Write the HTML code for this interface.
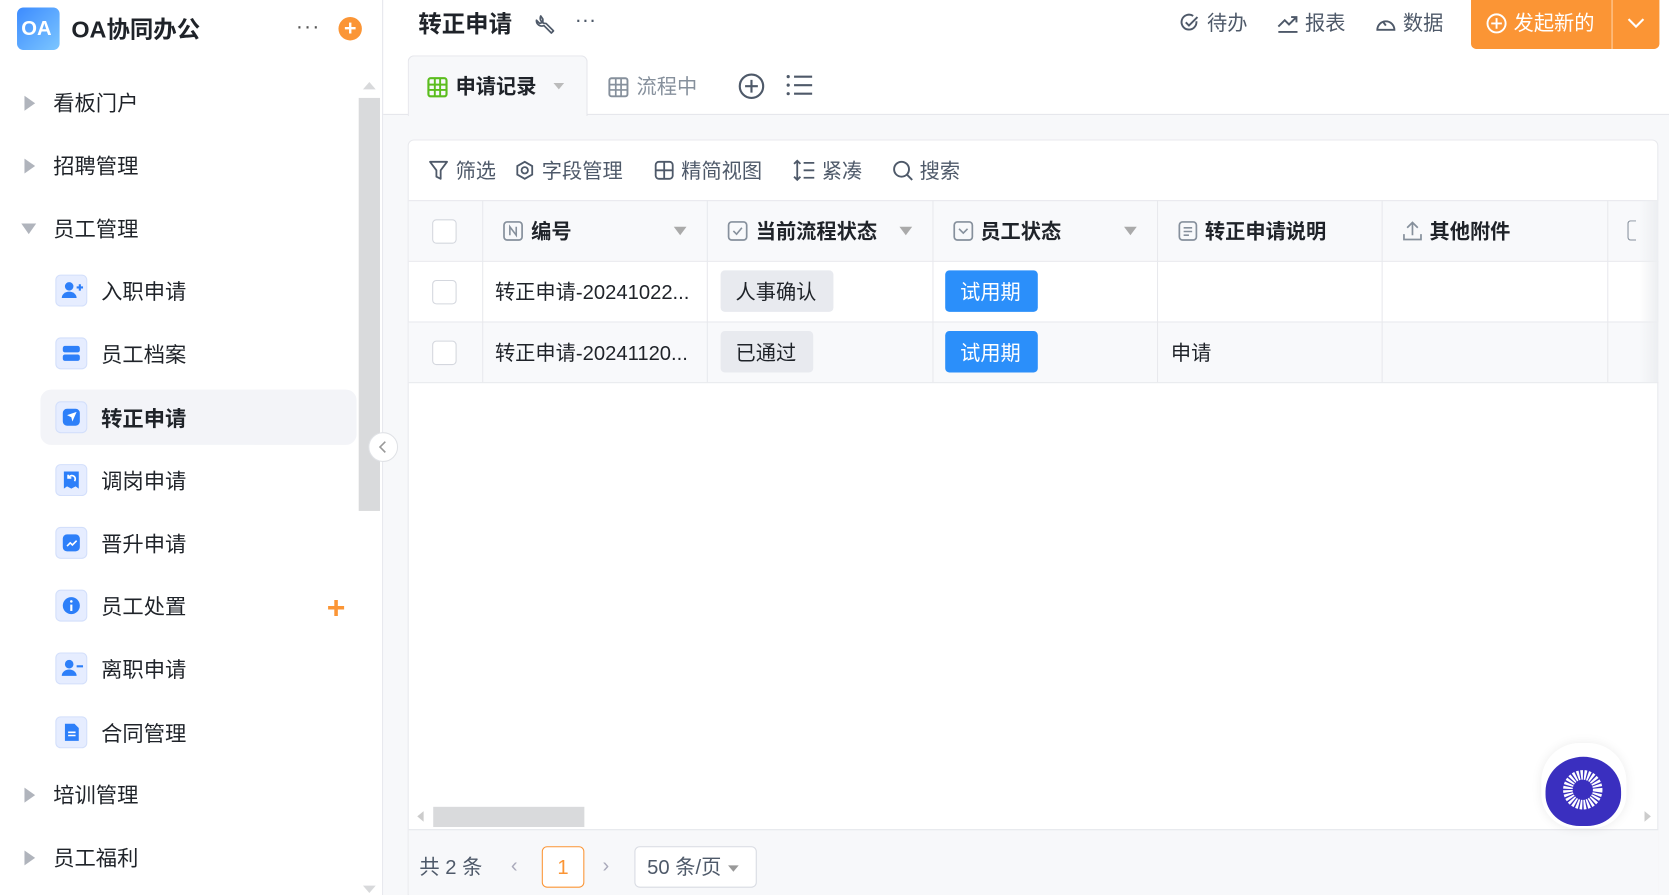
<!DOCTYPE html>
<html><head><meta charset="utf-8">
<style>
*{box-sizing:border-box;margin:0;padding:0}
html,body{width:1669px;height:895px;overflow:hidden;background:#fff}
#root{position:absolute;left:0;top:0;width:1568px;height:841px;transform:scale(1.06441);transform-origin:0 0;font-family:"Liberation Sans","Noto Sans CJK SC",sans-serif;color:#1f2329}
.a{position:absolute}
.t{position:absolute;white-space:nowrap;line-height:1;margin-top:1px}
.mi{font-size:20px;color:#1f2329}
.tri{position:absolute;width:0;height:0;border-top:7px solid transparent;border-bottom:7px solid transparent;border-left:10px solid #b0b4bc}
.ib{position:absolute;left:52px;width:30px;height:30px;border-radius:5px;background:#e6edff;border:1px solid #d3dffb}
.th{font-size:19px;font-weight:bold;color:#1f2329}
.gray{color:#4e5969}
</style></head><body><div id="root">
<!-- sidebar -->
<div class="a" style="left:359px;top:0;width:1px;height:841px;background:#e5e6eb"></div>
<div class="a" style="left:16px;top:7px;width:40px;height:40px;border-radius:6px;background:linear-gradient(135deg,#3c8bff,#7cc6ff)"></div>
<div class="t" style="left:20px;top:17px;font-size:19px;font-weight:bold;color:#fff">OA</div>
<div class="t" style="left:67px;top:16px;font-size:22px;font-weight:bold">OA协同办公</div>
<div class="t" style="left:278px;top:14px;font-size:20px;color:#555;letter-spacing:1px">···</div>
<div class="a" style="left:318px;top:16px;width:22px;height:22px;border-radius:50%;background:#fb9535"></div>
<div class="t" style="left:322px;top:16px;font-size:20px;color:#fff;font-weight:bold;width:14px;text-align:center">+</div>
<!-- scrollbar -->
<div class="a" style="left:337px;top:92px;width:20px;height:388px;background:#d9dadc"></div>
<div class="a" style="left:341px;top:77px;border-left:6px solid transparent;border-right:6px solid transparent;border-bottom:7px solid #d8d9db"></div>
<div class="a" style="left:341px;top:832px;border-left:6px solid transparent;border-right:6px solid transparent;border-top:7px solid #d8d9db"></div>
<!-- groups -->
<div class="tri" style="left:23px;top:90px"></div><div class="t mi" style="left:50px;top:87px">看板门户</div>
<div class="tri" style="left:23px;top:149px"></div><div class="t mi" style="left:50px;top:146px">招聘管理</div>
<div class="a" style="left:20px;top:210px;border-left:7px solid transparent;border-right:7px solid transparent;border-top:10px solid #b0b4bc"></div><div class="t mi" style="left:50px;top:205px">员工管理</div>
<div class="a" style="left:38px;top:366px;width:297px;height:52px;border-radius:10px;background:#f3f4f8"></div>
<div class="ib" style="top:258px"></div><div class="t mi" style="left:95px;top:264px">入职申请</div>
<div class="ib" style="top:317px"></div><div class="t mi" style="left:95px;top:323px">员工档案</div>
<div class="ib" style="top:377px"></div><div class="t mi" style="left:95px;top:383px;font-weight:bold">转正申请</div>
<div class="ib" style="top:436px"></div><div class="t mi" style="left:95px;top:442px">调岗申请</div>
<div class="ib" style="top:495px"></div><div class="t mi" style="left:95px;top:501px">晋升申请</div>
<div class="ib" style="top:554px"></div><div class="t mi" style="left:95px;top:560px">员工处置</div>
<div class="ib" style="top:613px"></div><div class="t mi" style="left:95px;top:619px">离职申请</div>
<div class="ib" style="top:673px"></div><div class="t mi" style="left:95px;top:679px">合同管理</div>
<svg class="a" style="left:52px;top:258px" width="30" height="30"><circle cx="13" cy="11" r="4" fill="#2d7ff9"/><path d="M6 22a7 6 0 0 1 14 0z" fill="#2d7ff9"/><path d="M20 12h6M23 9v6" stroke="#2d7ff9" stroke-width="2"/></svg>
<svg class="a" style="left:52px;top:317px" width="30" height="30"><rect x="7" y="8" width="16" height="6" rx="2" fill="#2d7ff9"/><rect x="7" y="16" width="16" height="6" rx="2" fill="#2d7ff9"/></svg>
<svg class="a" style="left:52px;top:377px" width="30" height="30"><rect x="7" y="7" width="16" height="16" rx="4" fill="#2d7ff9"/><path d="M11 13l9-3-4 9-1-4z" fill="#fff"/></svg>
<svg class="a" style="left:52px;top:436px" width="30" height="30"><path d="M8 7h14v16l-3-2-4 2-4-2-3 2z" fill="#2d7ff9"/><path d="M18 16a3 3 0 0 0-5-4l-1 1M12 10v3h3" stroke="#fff" stroke-width="1.6" fill="none"/></svg>
<svg class="a" style="left:52px;top:495px" width="30" height="30"><rect x="7" y="7" width="16" height="16" rx="4" fill="#2d7ff9"/><path d="M11 18l3-3 2 2 4-4" stroke="#fff" stroke-width="1.5" fill="none"/></svg>
<svg class="a" style="left:52px;top:554px" width="30" height="30"><circle cx="15" cy="15" r="8" fill="#2d7ff9"/><rect x="14" y="14" width="2" height="6" fill="#fff"/><circle cx="15" cy="11" r="1.2" fill="#fff"/></svg>
<svg class="a" style="left:52px;top:613px" width="30" height="30"><circle cx="13" cy="11" r="4" fill="#2d7ff9"/><path d="M6 22a7 6 0 0 1 14 0z" fill="#2d7ff9"/><path d="M20 13h6" stroke="#2d7ff9" stroke-width="2"/></svg>
<svg class="a" style="left:52px;top:673px" width="30" height="30"><path d="M9 7h9l4 4v12H9z" fill="#2d7ff9"/><path d="M12 15h7M12 18h7" stroke="#fff" stroke-width="1.5"/></svg>
<div class="t" style="left:307px;top:556px;font-size:30px;color:#fb9535;font-weight:bold">+</div>
<div class="tri" style="left:23px;top:740px"></div><div class="t mi" style="left:50px;top:737px">培训管理</div>
<div class="tri" style="left:23px;top:799px"></div><div class="t mi" style="left:50px;top:796px">员工福利</div>

<!-- main -->
<div class="a" style="left:360px;top:107px;width:1208px;height:734px;background:#f7f8fa"></div>
<div class="a" style="left:360px;top:107px;width:1208px;height:1px;background:#e5e6eb"></div>
<div class="t" style="left:393px;top:11px;font-size:22px;font-weight:bold">转正申请</div>
<svg class="a" style="left:502px;top:11px" width="22" height="22"><path d="M6 4a5 5 0 0 0 5 7l7 7-2 2-7-7a5 5 0 0 1-7-5l3 3 3-1 0-3z" fill="none" stroke="#4e5969" stroke-width="1.6" stroke-linejoin="round"/></svg>
<div class="t" style="left:540px;top:8px;font-size:20px;color:#4e5969">···</div>
<svg class="a" style="left:1108px;top:12px" width="20" height="20"><path d="M16 8a7 7 0 1 1-3-5" stroke="#4e5969" stroke-width="1.8" fill="none"/><path d="M6 9l3 3 8-8" stroke="#4e5969" stroke-width="1.8" fill="none"/></svg>
<div class="t gray" style="left:1134px;top:12px;font-size:19px">待办</div>
<svg class="a" style="left:1199px;top:12px" width="22" height="20"><path d="M2 13l6-6 4 4 7-7M14 4h5v5M2 18h18" stroke="#4e5969" stroke-width="1.8" fill="none"/></svg>
<div class="t gray" style="left:1226px;top:12px;font-size:19px">报表</div>
<svg class="a" style="left:1291px;top:11px" width="22" height="22"><path d="M3 17a8 8 0 1 1 16 0z" stroke="#4e5969" stroke-width="1.8" fill="none"/><path d="M11 13l-3-4" stroke="#4e5969" stroke-width="1.8"/></svg>
<div class="t gray" style="left:1318px;top:12px;font-size:19px">数据</div>
<div class="a" style="left:1382px;top:0;width:177px;height:46px;background:#fb9535;border-radius:0 0 5px 5px"></div>
<div class="a" style="left:1514px;top:0;width:1px;height:46px;background:#ffd3a8"></div>
<svg class="a" style="left:1395px;top:11px" width="22" height="22"><circle cx="11" cy="11" r="8.5" stroke="#fff" stroke-width="1.8" fill="none"/><path d="M11 6v10M6 11h10" stroke="#fff" stroke-width="1.8"/></svg>
<div class="t" style="left:1422px;top:12px;font-size:19px;color:#fff">发起新的</div>
<svg class="a" style="left:1527px;top:14px" width="20" height="16"><path d="M3 4l7 7 7-7" stroke="#fff" stroke-width="2" fill="none"/></svg>
<!-- tabs -->
<div class="a" style="left:383px;top:52px;width:169px;height:57px;background:#f7f8fa;border:1px solid #e5e6eb;border-bottom:none;border-radius:6px 6px 0 0"></div>
<svg class="a" style="left:401px;top:72px" width="20" height="20"><rect x="1.5" y="1.5" width="17" height="17" rx="2" fill="none" stroke="#5bbd1e" stroke-width="2"/><path d="M1 7.5h18M1 12.5h18M7.5 1v18M12.5 1v18" stroke="#5bbd1e" stroke-width="1.8"/></svg>
<div class="t" style="left:428px;top:72px;font-size:19px;font-weight:bold">申请记录</div>
<div class="a" style="left:520px;top:78px;border-left:5px solid transparent;border-right:5px solid transparent;border-top:6px solid #bbb"></div>
<svg class="a" style="left:571px;top:72px" width="20" height="20"><rect x="1.5" y="1.5" width="17" height="17" rx="2" fill="none" stroke="#86909c" stroke-width="1.8"/><path d="M1 7.5h18M1 12.5h18M7.5 1v18M12.5 1v18" stroke="#86909c" stroke-width="1.6"/></svg>
<div class="t" style="left:598px;top:72px;font-size:19px;color:#86909c">流程中</div>
<svg class="a" style="left:693px;top:68px" width="26" height="26"><circle cx="13" cy="13" r="11" stroke="#4e5969" stroke-width="2" fill="none"/><path d="M13 7v12M7 13h12" stroke="#4e5969" stroke-width="2"/></svg>
<svg class="a" style="left:738px;top:69px" width="26" height="22"><path d="M8 3h17M8 11h17M8 19h17" stroke="#4e5969" stroke-width="2"/><circle cx="2.5" cy="3" r="1.5" fill="#4e5969"/><circle cx="2.5" cy="11" r="1.5" fill="#4e5969"/><circle cx="2.5" cy="19" r="1.5" fill="#4e5969"/></svg>
<!-- card -->
<div class="a" style="left:383px;top:131px;width:1175px;height:710px;background:#fff;border:1px solid #e8e9ed;border-radius:6px 6px 0 0"></div>
<svg class="a" style="left:402px;top:150px" width="20" height="20"><path d="M2 2h16l-6 8v8l-4-2v-6z" stroke="#4e5969" stroke-width="1.7" fill="none" stroke-linejoin="round"/></svg>
<div class="t gray" style="left:428px;top:151px;font-size:19px">筛选</div>
<svg class="a" style="left:483px;top:150px" width="20" height="20"><path d="M10 2l7 4v8l-7 4-7-4V6z" stroke="#4e5969" stroke-width="1.7" fill="none"/><circle cx="10" cy="10" r="3" stroke="#4e5969" stroke-width="1.7" fill="none"/></svg>
<div class="t gray" style="left:509px;top:151px;font-size:19px">字段管理</div>
<svg class="a" style="left:614px;top:150px" width="20" height="20"><rect x="2" y="2" width="16" height="16" rx="3" stroke="#4e5969" stroke-width="1.7" fill="none"/><path d="M10 2v16M2 10h16" stroke="#4e5969" stroke-width="1.7"/></svg>
<div class="t gray" style="left:640px;top:151px;font-size:19px">精简视图</div>
<svg class="a" style="left:745px;top:149px" width="22" height="22"><path d="M4 2v18M1 5l3-3 3 3M1 17l3 3 3-3M10 4h10M10 11h10M10 18h10" stroke="#4e5969" stroke-width="1.7" fill="none"/></svg>
<div class="t gray" style="left:772px;top:151px;font-size:19px">紧凑</div>
<svg class="a" style="left:838px;top:150px" width="22" height="22"><circle cx="9" cy="9" r="7" stroke="#4e5969" stroke-width="1.8" fill="none"/><path d="M14 14l5 5" stroke="#4e5969" stroke-width="1.8"/></svg>
<div class="t gray" style="left:864px;top:151px;font-size:19px">搜索</div>
<!-- table -->
<div class="a" style="left:384px;top:188px;width:1174px;height:57px;background:#f8f9fb"></div>
<div class="a" style="left:384px;top:302px;width:1174px;height:57px;background:#f8f9fb"></div>
<div class="a" style="left:384px;top:188px;width:1174px;height:1px;background:#e8e9ed"></div>
<div class="a" style="left:384px;top:245px;width:1174px;height:1px;background:#e8e9ed"></div>
<div class="a" style="left:384px;top:302px;width:1174px;height:1px;background:#e8e9ed"></div>
<div class="a" style="left:384px;top:359px;width:1174px;height:1px;background:#e8e9ed"></div>
<div class="a" style="left:453px;top:188px;width:1px;height:171px;background:#e8e9ed"></div>
<div class="a" style="left:664px;top:188px;width:1px;height:171px;background:#e8e9ed"></div>
<div class="a" style="left:876px;top:188px;width:1px;height:171px;background:#e8e9ed"></div>
<div class="a" style="left:1087px;top:188px;width:1px;height:171px;background:#e8e9ed"></div>
<div class="a" style="left:1298px;top:188px;width:1px;height:171px;background:#e8e9ed"></div>
<div class="a" style="left:1510px;top:188px;width:1px;height:171px;background:#e8e9ed"></div>
<div class="a" style="left:1540px;top:188px;width:18px;height:171px;background:linear-gradient(90deg,rgba(240,241,244,0),#eceef1)"></div>
<div class="a" style="left:406px;top:206px;width:23px;height:23px;border:1px solid #d4d7de;border-radius:4px;background:#fff"></div>
<div class="a" style="left:406px;top:263px;width:23px;height:23px;border:1px solid #d4d7de;border-radius:4px;background:#fff"></div>
<div class="a" style="left:406px;top:320px;width:23px;height:23px;border:1px solid #d4d7de;border-radius:4px;background:#fff"></div>
<svg class="a" style="left:472px;top:207px" width="20" height="20"><rect x="1.5" y="1.5" width="17" height="17" rx="3" stroke="#86909c" stroke-width="1.6" fill="none"/><path d="M7 14V6l6 8V6" stroke="#86909c" stroke-width="1.5" fill="none"/></svg>
<div class="t th" style="left:499px;top:208px">编号</div>
<div class="a" style="left:633px;top:213px;border-left:6px solid transparent;border-right:6px solid transparent;border-top:8px solid #aaa"></div>
<svg class="a" style="left:683px;top:207px" width="20" height="20"><rect x="1.5" y="1.5" width="17" height="17" rx="3" stroke="#86909c" stroke-width="1.6" fill="none"/><path d="M6 10l3 3 5-6" stroke="#86909c" stroke-width="1.5" fill="none"/></svg>
<div class="t th" style="left:710px;top:208px">当前流程状态</div>
<div class="a" style="left:845px;top:213px;border-left:6px solid transparent;border-right:6px solid transparent;border-top:8px solid #aaa"></div>
<svg class="a" style="left:895px;top:207px" width="20" height="20"><rect x="1.5" y="1.5" width="17" height="17" rx="3" stroke="#86909c" stroke-width="1.6" fill="none"/><path d="M6 8l4 4 4-4" stroke="#86909c" stroke-width="1.5" fill="none"/></svg>
<div class="t th" style="left:921px;top:208px">员工状态</div>
<div class="a" style="left:1056px;top:213px;border-left:6px solid transparent;border-right:6px solid transparent;border-top:8px solid #aaa"></div>
<svg class="a" style="left:1106px;top:207px" width="20" height="20"><rect x="2" y="1.5" width="16" height="17" rx="3" stroke="#86909c" stroke-width="1.6" fill="none"/><path d="M6 7h8M6 10.5h8M6 14h5" stroke="#86909c" stroke-width="1.5"/></svg>
<div class="t th" style="left:1132px;top:208px">转正申请说明</div>
<svg class="a" style="left:1317px;top:206px" width="20" height="22"><path d="M10 15V3M5 8l5-5 5 5M2 14v5h16v-5" stroke="#86909c" stroke-width="1.6" fill="none"/></svg>
<div class="t th" style="left:1343px;top:208px">其他附件</div>
<div class="a" style="left:1529px;top:207px;width:8px;height:19px;border:1.6px solid #86909c;border-right:none;border-radius:3px 0 0 3px"></div>
<div class="t" style="left:465px;top:265px;font-size:19px">转正申请-20241022...</div>
<div class="t" style="left:465px;top:322px;font-size:19px">转正申请-20241120...</div>
<div class="a" style="left:677px;top:254px;width:106px;height:39px;background:#e8eaef;border-radius:4px"></div>
<div class="t" style="left:691px;top:265px;font-size:19px">人事确认</div>
<div class="a" style="left:677px;top:311px;width:87px;height:39px;background:#e8eaef;border-radius:4px"></div>
<div class="t" style="left:691px;top:322px;font-size:19px">已通过</div>
<div class="a" style="left:888px;top:254px;width:87px;height:39px;background:#2b8ffa;border-radius:4px"></div>
<div class="t" style="left:902px;top:265px;font-size:19px;color:#fff">试用期</div>
<div class="a" style="left:888px;top:311px;width:87px;height:39px;background:#2b8ffa;border-radius:4px"></div>
<div class="t" style="left:902px;top:322px;font-size:19px;color:#fff">试用期</div>
<div class="t" style="left:1100px;top:322px;font-size:19px">申请</div>
<!-- hscroll -->
<div class="a" style="left:407px;top:758px;width:142px;height:19px;background:#d9dadc"></div>
<div class="a" style="left:392px;top:762px;border-top:5px solid transparent;border-bottom:5px solid transparent;border-right:6px solid #ccc"></div>
<div class="a" style="left:1545px;top:762px;border-top:5px solid transparent;border-bottom:5px solid transparent;border-left:6px solid #ccc"></div>
<!-- footer -->
<div class="a" style="left:384px;top:779px;width:1174px;height:62px;background:#f7f8fa;border-top:1px solid #e5e6eb"></div>
<div class="t gray" style="left:394px;top:805px;font-size:19px">共 2 条</div>
<div class="t" style="left:480px;top:803px;font-size:19px;color:#aab">&lsaquo;</div>
<div class="a" style="left:509px;top:795px;width:40px;height:39px;border:1px solid #fb9535;border-radius:5px;background:#fff"></div>
<div class="t" style="left:509px;top:805px;width:40px;text-align:center;font-size:19px;color:#fb9535">1</div>
<div class="t" style="left:566px;top:803px;font-size:19px;color:#aab">&rsaquo;</div>
<div class="a" style="left:596px;top:795px;width:115px;height:39px;border:1px solid #d8dbe2;border-radius:5px;background:#fff"></div>
<div class="t gray" style="left:608px;top:805px;font-size:19px">50 条/页</div>
<div class="a" style="left:684px;top:813px;border-left:5px solid transparent;border-right:5px solid transparent;border-top:6px solid #999"></div>
<!-- float -->
<div class="a" style="left:1448px;top:698px;width:80px;height:80px;background:#fff;border-radius:45% 45% 40% 40%;box-shadow:0 0 10px rgba(0,0,0,0.08)"></div>
<div class="a" style="left:1452px;top:711px;width:71px;height:65px;background:#3a2fbf;border-radius:50% 50% 45% 45%"></div>
<svg class="a" style="left:1467px;top:722px" width="40" height="40"><circle cx="20" cy="20" r="14" fill="none" stroke="#fff" stroke-width="9" stroke-dasharray="2 1.2"/><rect x="16" y="16" width="8" height="8" fill="#3a2fbf"/></svg>
<!-- collapse button on top -->
<div class="a" style="left:346px;top:406px;width:28px;height:28px;border-radius:50%;background:#fff;border:1px solid #e0e2e6"></div>
<svg class="a" style="left:346px;top:406px" width="28" height="28"><path d="M16 9l-5 5 5 5" stroke="#999" stroke-width="1.5" fill="none"/></svg>
</div></body></html>
